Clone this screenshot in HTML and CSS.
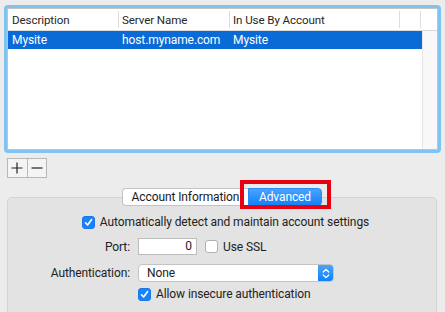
FILE: index.html
```html
<!DOCTYPE html>
<html>
<head>
<meta charset="utf-8">
<link rel="stylesheet" href="styles.css">
</head>
<body>
<div class="table-ring">
  <div class="table">
    <div class="thead">
      <div class="th c1">Description</div>
      <div class="th c2">Server Name</div>
      <div class="th c3">In Use By Account</div>
      <div class="th c4"></div>
      <div class="th c5"></div>
    </div>
    <div class="tbody">
      <div class="rows">
        <div class="row selected">
          <div class="td c1">Mysite</div>
          <div class="td c2">host.myname.com</div>
          <div class="td c3">Mysite</div>
        </div>
      </div>
      <div class="scroller"></div>
    </div>
  </div>
</div>

<div class="pm">
  <div class="pm-btn"><svg width="12" height="12" viewBox="0 0 12 12"><path d="M6 0.5V11.5M0.5 6H11.5" stroke="#222" stroke-width="1.2"/></svg></div>
  <div class="pm-btn"><svg width="12" height="12" viewBox="0 0 12 12"><path d="M0.5 6H11.5" stroke="#222" stroke-width="1.2"/></svg></div>
</div>

<div class="tabbox">
  <div class="tabs">
    <div class="tab">Account Information</div>
    <div class="tab active">Advanced</div>
    <div class="highlight"></div>
  </div>
  <div class="panel">
    <div class="row-center">
      <span class="cb checked"><svg width="9" height="9" viewBox="0 0 9 9"><path d="M1.5 4.8L3.6 7L7.6 1.6" fill="none" stroke="#fff" stroke-width="1.6" stroke-linecap="round" stroke-linejoin="round"/></svg></span>
      <span class="lbl">Automatically detect and maintain account settings</span>
    </div>
    <div class="frow port-row">
      <div class="flabel">Port:</div>
      <div class="field">0</div>
      <span class="cb"></span>
      <span class="lbl">Use SSL</span>
    </div>
    <div class="frow auth-row">
      <div class="flabel">Authentication:</div>
      <div class="popup">
        <span class="popup-text">None</span>
        <span class="stepper"><svg width="8" height="11" viewBox="0 0 8 11"><path d="M1.3 4L4 1.4L6.7 4M1.3 7L4 9.6L6.7 7" fill="none" stroke="#fff" stroke-width="1.3" stroke-linecap="round" stroke-linejoin="round"/></svg></span>
      </div>
    </div>
    <div class="frow allow-row">
      <div class="flabel"></div>
      <span class="cb checked"><svg width="9" height="9" viewBox="0 0 9 9"><path d="M1.5 4.8L3.6 7L7.6 1.6" fill="none" stroke="#fff" stroke-width="1.6" stroke-linecap="round" stroke-linejoin="round"/></svg></span>
      <span class="lbl">Allow insecure authentication</span>
    </div>
  </div>
</div>
</body>
</html>
```
FILE: styles.css
```css
* { box-sizing: border-box; }
html, body { margin: 0; padding: 0; }
body {
  width: 445px;
  height: 312px;
  overflow: hidden;
  background: #ececec;
  font-family: Roboto, "Liberation Sans", sans-serif;
  font-size: 12px;
  letter-spacing: -0.1px;
  color: #222;
}
.table-ring {
  margin: 5px 0 0 4px;
  width: 437px;
  height: 148px;
  border: 3px solid #80c3f1;
  border-radius: 4px;
}
.table {
  height: 100%;
  border: 1px solid #c3c3c3;
  background: #fff;
  display: flex;
  flex-direction: column;
}
.thead {
  display: flex;
  height: 22px;
  border-bottom: 1px solid #dadada;
  font-size: 11.6px;
  color: #262626;
}
.th {
  display: flex;
  align-items: center;
  padding-left: 4px;
  position: relative;
}
.th + .th::before {
  content: "";
  position: absolute;
  left: 0; top: 2px; bottom: 2px;
  width: 1px;
  background: #dddddd;
}
.c1 { width: 110px; }
.c2 { width: 111px; }
.c3 { width: 170px; }
.c4 { width: 21px; }
.c5 { flex: 1; }
.tbody { flex: 1; display: flex; }
.rows { flex: 1; }
.row { display: flex; height: 18px; align-items: center; }
.row.selected { background: #0a6bd6; color: #fff; }
.td { padding-left: 4px; }
.scroller {
  width: 15px;
  background: #f8f8f8;
  border-left: 1px solid #e6e6e6;
}
.pm {
  display: flex;
  margin: 5px 0 0 7px;
  width: 40px;
  height: 20px;
  border: 1px solid #b8b8b8;
  background: #f4f4f4;
}
.pm-btn {
  flex: 1;
  display: flex;
  align-items: center;
  justify-content: center;
}
.pm-btn + .pm-btn { border-left: 1px solid #b8b8b8; }
.tabbox {
  position: relative;
  margin: 10px 0 0 7px;
  width: 430px;
}
.tabs {
  position: relative;
  z-index: 2;
  display: flex;
  justify-content: center;
  height: 18px;
}
.tab {
  height: 18px;
  display: flex;
  align-items: center;
  justify-content: center;
  width: 126px;
  background: #fff;
  border: 1px solid #c4c4c4;
  color: #1a1a1a;
}
.tab:first-child { border-radius: 4px 0 0 4px; border-right: none; }
.tab.active {
  width: 74px;
  background: linear-gradient(#4aa3fd, #1281fb);
  border-color: #2a8bf4;
  color: #fff;
  border-radius: 0 4px 4px 0;
}
.highlight {
  position: absolute;
  left: 233px;
  top: -8px;
  width: 91px;
  height: 29px;
  border: 4px solid #ea0010;
}
.panel {
  margin-top: -9px;
  height: 130px;
  background: #e3e3e3;
  border: 1px solid #d4d4d4;
  border-radius: 5px;
  padding-top: 16px;
}
.row-center {
  display: flex;
  align-items: center;
  justify-content: center;
  height: 16px;
  padding-left: 7px;
}
.cb {
  width: 13px;
  height: 13px;
  border-radius: 3px;
  background: #fff;
  border: 1px solid #b0b0b0;
  display: inline-flex;
  align-items: center;
  justify-content: center;
  flex: none;
}
.cb.checked {
  background: #1a82fb;
  border-color: #1a78e8;
}
.lbl { margin-left: 5px; }
.frow {
  display: flex;
  align-items: center;
}
.flabel {
  width: 122px;
  text-align: right;
  margin-right: 8px;
  flex: none;
}
.port-row { margin-top: 8px; height: 17px; }
.field {
  width: 59px;
  height: 17px;
  background: #fff;
  border: 1px solid #bcbcbc;
  text-align: right;
  padding-right: 4px;
  line-height: 15px;
  margin-right: 8px;
}
.auth-row { margin-top: 9px; height: 18px; }
.popup {
  width: 196px;
  height: 18px;
  display: flex;
  background: #fff;
  border: 1px solid #c4c4c4;
  border-radius: 4px;
  overflow: hidden;
}
.popup-text { flex: 1; padding-left: 8px; line-height: 16px; }
.stepper {
  width: 15px;
  background: linear-gradient(#4aa3fd, #1281fb);
  display: flex;
  align-items: center;
  justify-content: center;
}
.allow-row { margin-top: 4px; height: 16px; }
```
